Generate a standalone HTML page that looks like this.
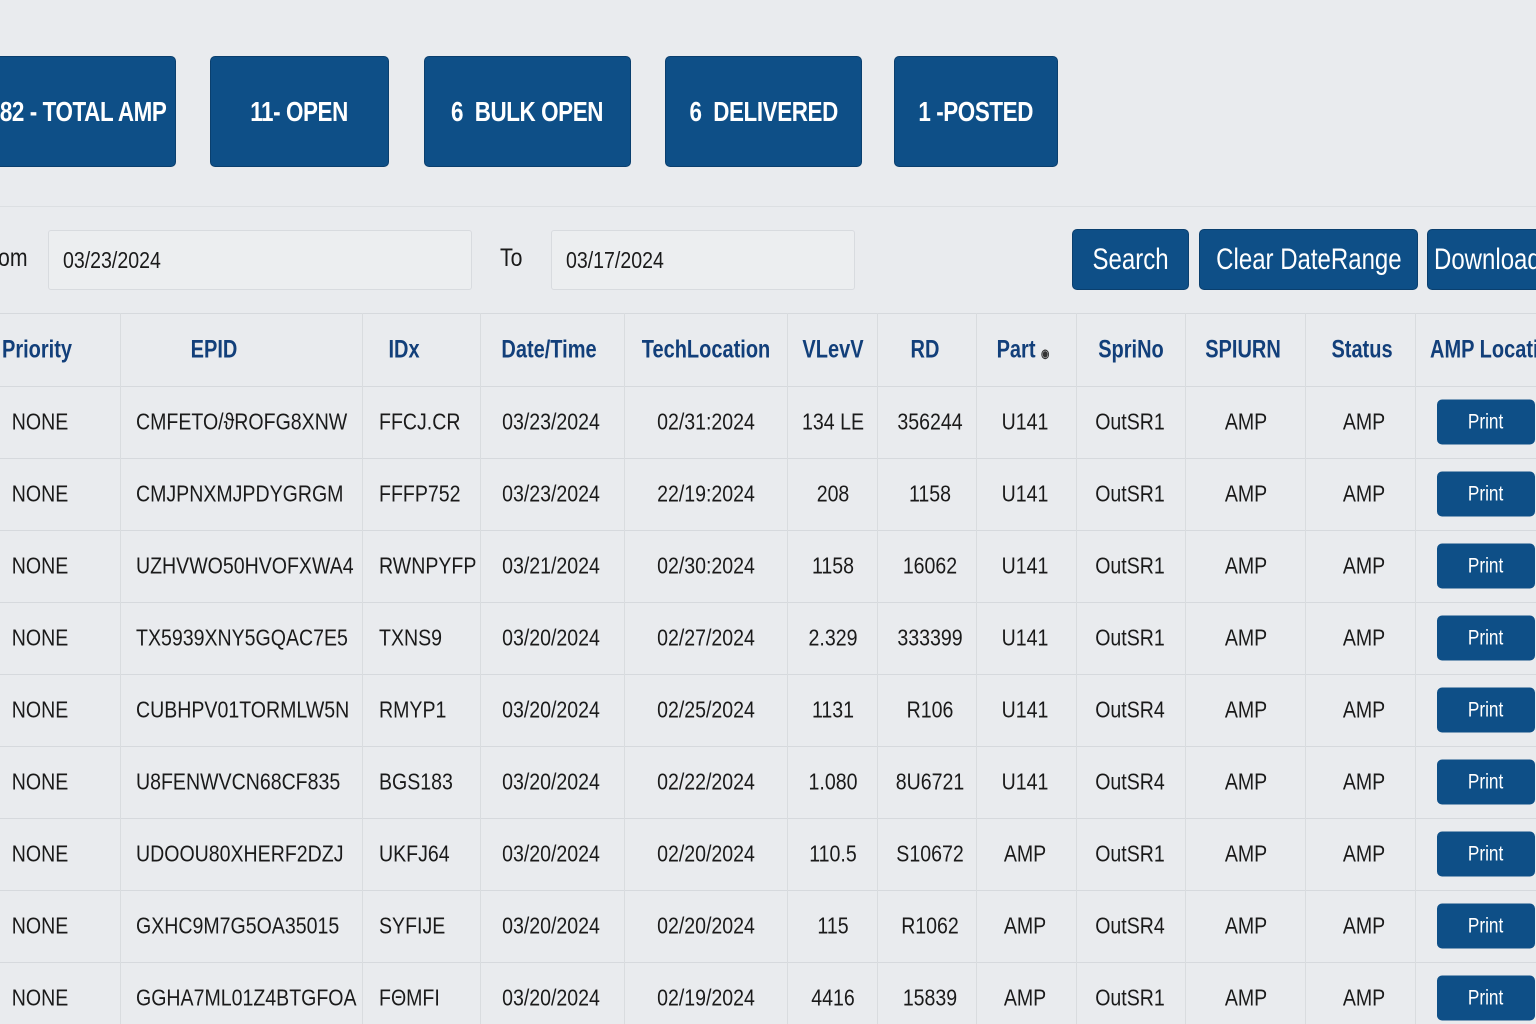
<!DOCTYPE html>
<html><head><meta charset="utf-8"><style>
*{margin:0;padding:0;box-sizing:border-box}
body{width:1536px;height:1024px;overflow:hidden;background:#e9ebee;font-family:"Liberation Sans",sans-serif;position:relative;color:#1a1a1a}
.b{position:absolute;background:#0e4f87;color:#fff;border-radius:5px;display:flex;align-items:center;justify-content:center;border:1px solid #0a3f6e;white-space:nowrap}
.b span{display:inline-block;transform:scaleX(.8)}
.top{top:56px;height:111px;font-weight:bold;font-size:28px;letter-spacing:-0.5px}
.sb{top:229px;height:61px;font-size:30px}
.inp{position:absolute;top:230px;height:60px;background:#eceef0;border:1px solid #d8dbdf;border-radius:3px;font-size:23px;padding-left:14px;display:flex;align-items:center}
.inp span{display:inline-block;transform:scaleX(.85);transform-origin:left}
.lbl{position:absolute;font-size:25px;transform:scaleX(.85);transform-origin:left}
.vl{position:absolute;top:313px;bottom:0;width:1px;background:#d9dcdf}
.hl{position:absolute;left:0;right:0;height:1px;background:#d6d9dd}
.c{position:absolute;font-size:23px;transform:translate(-50%,-50%) scaleX(.85);white-space:nowrap}
.l{position:absolute;font-size:23px;transform:translateY(-50%) scaleX(.85);transform-origin:left;white-space:nowrap}
.h{position:absolute;font-size:25px;font-weight:bold;color:#123f7a;transform:translate(-50%,-50%) scaleX(.8);white-space:nowrap;top:350px}
.p{position:absolute;left:1437px;width:98px;height:45px;background:#0e4f87;color:#fff;border-radius:5px;font-size:21px;display:flex;align-items:center;justify-content:center;transform:translateY(-50%)}
.p span{display:inline-block;transform:scaleX(.82)}
</style></head><body>
<div class="b top" style="left:-10px;width:186px"><span>82 - TOTAL AMP</span></div>
<div class="b top" style="left:210px;width:179px"><span>11- OPEN</span></div>
<div class="b top" style="left:424px;width:207px"><span>6&nbsp; BULK OPEN</span></div>
<div class="b top" style="left:665px;width:197px"><span>6&nbsp; DELIVERED</span></div>
<div class="b top" style="left:894px;width:164px"><span>1 -POSTED</span></div>
<div class="hl" style="top:206px;background:#dcdfe2"></div>
<div class="lbl" style="left:-2px;top:244px">om</div>
<div class="inp" style="left:48px;width:424px"><span>03/23/2024</span></div>
<div class="lbl" style="left:500px;top:244px">To</div>
<div class="inp" style="left:551px;width:304px"><span>03/17/2024</span></div>
<div class="b sb" style="left:1072px;width:117px"><span>Search</span></div>
<div class="b sb" style="left:1199px;width:219px"><span>Clear DateRange</span></div>
<div class="b sb" style="left:1427px;width:130px;justify-content:flex-start;padding-left:6px"><span style="transform-origin:left">Download</span></div>
<div class="hl" style="top:313px"></div>
<div class="hl" style="top:386px"></div>
<div class="hl" style="top:458px"></div>
<div class="hl" style="top:530px"></div>
<div class="hl" style="top:602px"></div>
<div class="hl" style="top:674px"></div>
<div class="hl" style="top:746px"></div>
<div class="hl" style="top:818px"></div>
<div class="hl" style="top:890px"></div>
<div class="hl" style="top:962px"></div>
<div class="vl" style="left:120px"></div><div class="vl" style="left:362px"></div><div class="vl" style="left:480px"></div><div class="vl" style="left:624px"></div><div class="vl" style="left:787px"></div><div class="vl" style="left:877px"></div><div class="vl" style="left:976px"></div><div class="vl" style="left:1076px"></div><div class="vl" style="left:1185px"></div><div class="vl" style="left:1305px"></div><div class="vl" style="left:1415px"></div>
<div class="h" style="left:37px">Priority</div>
<div class="h" style="left:214px">EPID</div>
<div class="h" style="left:404px">IDx</div>
<div class="h" style="left:549px">Date/Time</div>
<div class="h" style="left:706px">TechLocation</div>
<div class="h" style="left:833px">VLevV</div>
<div class="h" style="left:925px">RD</div>
<div class="h" style="left:1023px">Part <span style="font-size:12px;color:#333">◉</span></div>
<div class="h" style="left:1131px">SpriNo</div>
<div class="h" style="left:1243px">SPIURN</div>
<div class="h" style="left:1362px">Status</div>
<div class="h" style="left:1430px;transform:translateY(-50%) scaleX(.8);transform-origin:left">AMP Location</div>
<div id="rows"></div>
<script>
var d=[["CMFETO/ϑROFG8XNW","FFCJ.CR","03/23/2024","02/31:2024","134 LE","356244","U141","OutSR1"],
["CMJPNXMJPDYGRGM","FFFP752","03/23/2024","22/19:2024","208","1158","U141","OutSR1"],
["UZHVWO50HVOFXWA4","RWNPYFP","03/21/2024","02/30:2024","1158","16062","U141","OutSR1"],
["TX5939XNY5GQAC7E5","TXNS9","03/20/2024","02/27/2024","2.329","333399","U141","OutSR1"],
["CUBHPV01TORMLW5N","RMYP1","03/20/2024","02/25/2024","1131","R106","U141","OutSR4"],
["U8FENWVCN68CF835","BGS183","03/20/2024","02/22/2024","1.080","8U6721","U141","OutSR4"],
["UDOOU80XHERF2DZJ","UKFJ64","03/20/2024","02/20/2024","110.5","S10672","AMP","OutSR1"],
["GXHC9M7G5OA35015","SYFIJE","03/20/2024","02/20/2024","115","R1062","AMP","OutSR4"],
["GGHA7ML01Z4BTGFOA","FΘMFI","03/20/2024","02/19/2024","4416","15839","AMP","OutSR1"]];
var h="";d.forEach(function(r,i){var y=422+i*72;
h+='<div class="c" style="left:40px;top:'+y+'px">NONE</div>';
h+='<div class="l" style="left:136px;top:'+y+'px">'+r[0]+'</div>';
h+='<div class="l" style="left:379px;top:'+y+'px">'+r[1]+'</div>';
var xs=[551,706,833,930,1025,1130];for(var k=0;k<6;k++)h+='<div class="c" style="left:'+xs[k]+'px;top:'+y+'px">'+r[k+2]+'</div>';
h+='<div class="c" style="left:1246px;top:'+y+'px">AMP</div><div class="c" style="left:1364px;top:'+y+'px">AMP</div>';
h+='<div class="p" style="top:'+y+'px"><span>Print</span></div>';});
document.getElementById("rows").innerHTML=h;
</script>
</body></html>
